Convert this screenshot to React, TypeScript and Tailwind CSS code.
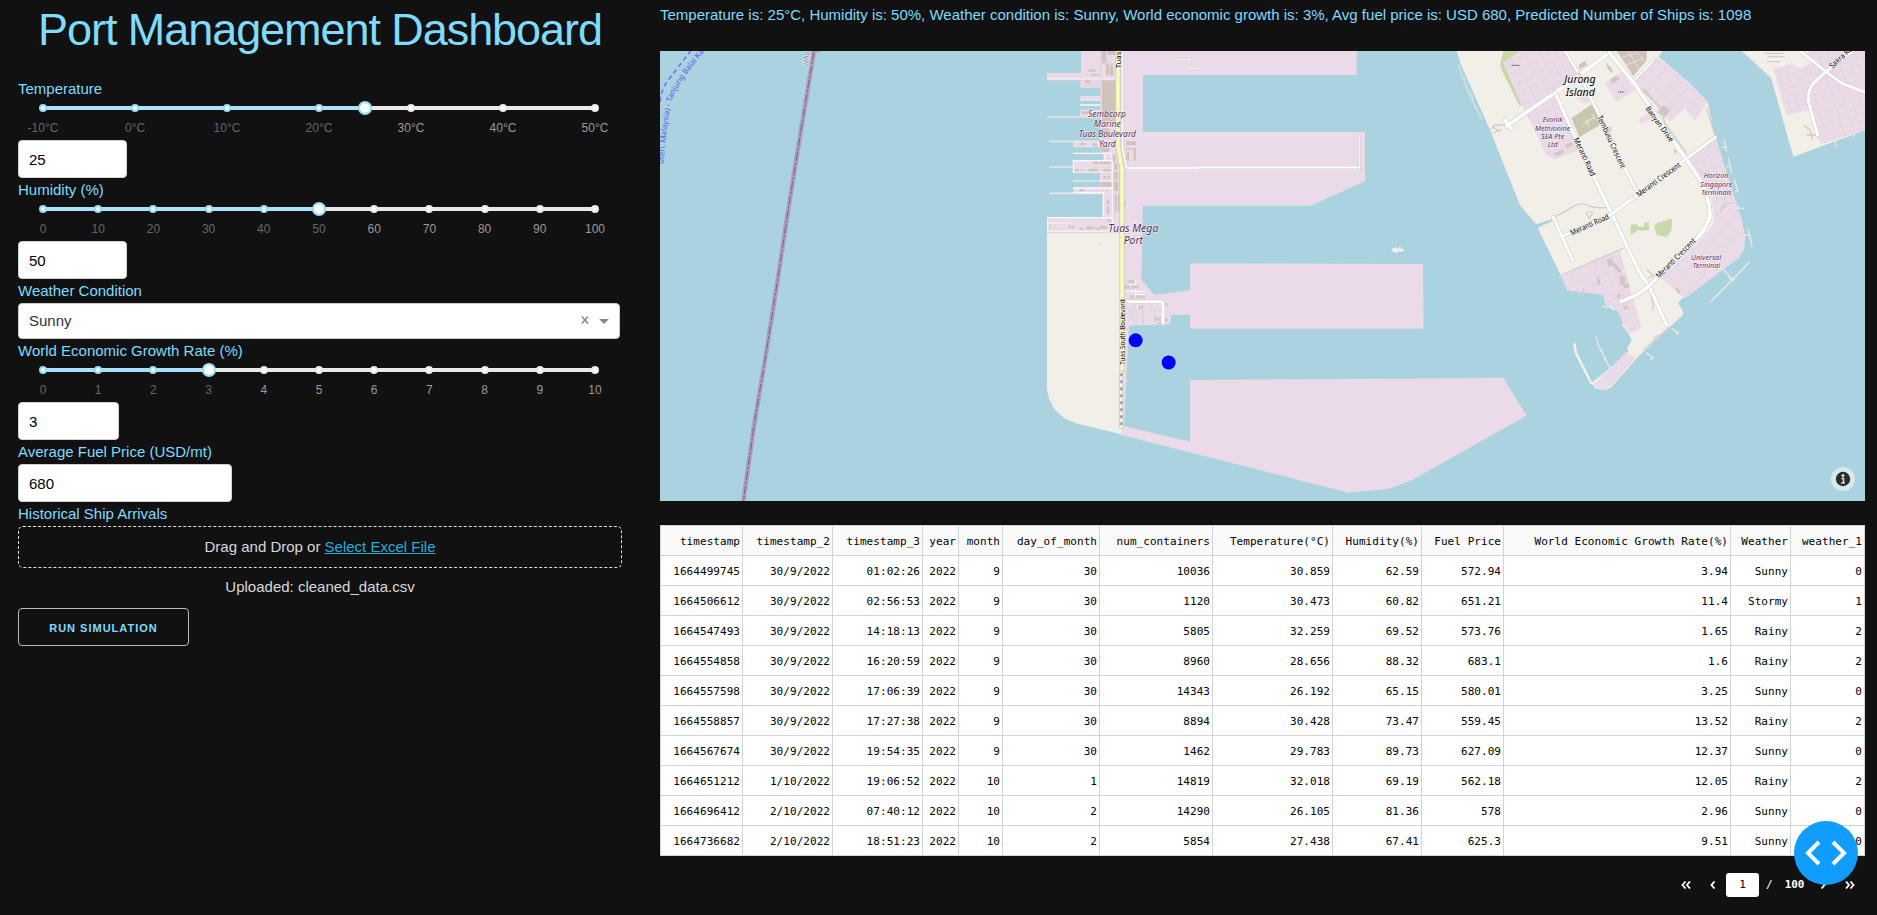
import React from "react";

type Mark = { at: number; label: string };

function Slider({ marks, value }: { marks: Mark[]; value: number }) {
  return (
    <div className="h-[39px] pl-[25px] pr-[27px]">
      <div className="relative h-[14px]">
        <div className="absolute left-0 top-[5px] h-1 w-full rounded-md bg-[#e9e9e9]" />
        <div className="absolute left-0 top-[5px] h-1 rounded-md bg-[#abe2fb]" style={{ width: `${value}%` }} />
        {marks.map((m) => (
          <span
            key={m.at}
            className={`absolute top-[3px] -ml-1 size-2 rounded-full border-2 bg-white ${m.at <= value ? "border-[#96dbfa]" : "border-[#e9e9e9]"}`}
            style={{ left: `${m.at}%` }}
          />
        ))}
        <span
          className="absolute top-0 -ml-[7px] size-[14px] rounded-full border-2 border-[#96dbfa] bg-white"
          style={{ left: `${value}%` }}
        />
        {marks.map((m) => (
          <span
            key={m.at}
            className={`absolute top-[18px] -translate-x-1/2 whitespace-nowrap text-[12px] leading-[18px] ${m.at <= value ? "text-[#666]" : "text-[#999]"}`}
            style={{ left: `${m.at}%` }}
          >
            {m.label}
          </span>
        ))}
      </div>
    </div>
  );
}

const Label = ({ children }: { children: React.ReactNode }) => (
  <label className="block h-6 text-[#7fdbff]">{children}</label>
);

const Field = ({ value, width }: { value: string; width: string }) => (
  <input
    defaultValue={value}
    className={`block h-[38px] rounded border border-[#d1d1d1] bg-white px-[10px] text-[15px] text-black outline-none ${width}`}
  />
);

const tempMarks: Mark[] = [-10, 0, 10, 20, 30, 40, 50].map((t, i) => ({ at: (i * 100) / 6, label: `${t}°C` }));
const pctMarks: Mark[] = Array.from({ length: 11 }, (_, i) => ({ at: i * 10, label: `${i * 10}` }));
const growthMarks: Mark[] = Array.from({ length: 11 }, (_, i) => ({ at: i * 10, label: `${i}` }));

function Road({ d, w = 10 }: { d: string; w?: number }) {
  return (
    <g fill="none" strokeLinecap="round" strokeLinejoin="round">
      <path d={d} stroke="#cfcac8" strokeWidth={w + 3} />
      <path d={d} stroke="#fff" strokeWidth={w} />
    </g>
  );
}

type TProps = { x: number; y: number; s: number; w?: number; r?: number; c?: string; italic?: boolean; children: string };
function T({ x, y, s, w, r = 0, c = "#5c2d5c", italic = true, children }: TProps) {
  return (
    <text
      transform={`translate(${x} ${y}) rotate(${r})`}
      textAnchor="middle"
      fontFamily="Noto Sans, sans-serif"
      fontSize={s}
      fontStyle={italic ? "italic" : "normal"}
      textLength={w}
      lengthAdjust="spacingAndGlyphs"
      fill={c}
      stroke="#fff"
      strokeOpacity={0.6}
      strokeWidth={4}
      strokeLinejoin="round"
      paintOrder="stroke"
    >
      {children}
    </text>
  );
}

const rects = (list: number[][]) => list.map(([x, y, w, h], i) => <rect key={i} x={x} y={y} width={w} height={h} />);

function PortMap() {
  return (
    <svg className="block h-[450px] w-[1205px]" viewBox="660 51 1205 450">
      <defs>
        <pattern id="lotsA" width="40" height="32" patternUnits="userSpaceOnUse" patternTransform="rotate(-30)">
          <path d="M0 0H40M0 0V32M20 0V16" stroke="#cfc8cf" strokeWidth="3.500" fill="none" />
          <path d="M0 0H40M0 0V32M20 0V16" stroke="#f0ebee" strokeWidth="1.500" fill="none" />
        </pattern>
        <pattern id="lotsB" width="26" height="20" patternUnits="userSpaceOnUse" patternTransform="rotate(-18)">
          <path d="M0 0H26M0 0V20" stroke="#d9cfd8" strokeWidth="2.500" fill="none" />
        </pattern>
        <pattern id="lotsC" width="44" height="34" patternUnits="userSpaceOnUse" patternTransform="rotate(40)">
          <path d="M0 0H44M0 0V34" stroke="#cfc8cf" strokeWidth="3.500" fill="none" />
          <path d="M0 0H44M0 0V34" stroke="#f0ebee" strokeWidth="1.500" fill="none" />
        </pattern>
        <path id="ferry" d="M40 492 C46 430 50 380 60 325 C68 270 115 215 175 138" />
      </defs>
      <rect x="660" y="51" width="1205" height="450" fill="#aad3df" />

      {/* Maritime border and ferry line */}
      <g transform="translate(650 0) scale(.33333)">
        <g fill="none">
          <path d="M492 153L445 440L413 640L383 840L345 1080L313 1270L280 1504" stroke="#a9a3bf" strokeWidth="14" />
          <path d="M492 153L445 440L413 640L383 840L345 1080L313 1270L280 1504" stroke="#8b5f8c" strokeWidth="3.500" strokeDasharray="26 5 8 5" />
          <path d="M490 153L510 153" stroke="#a9a3bf" strokeWidth="9" />
          <path d="M30 305Q34 265 58 236L124 150" stroke="#6a77f5" strokeWidth="5" strokeDasharray="14 10" />
        </g>
        <text fontFamily="Noto Sans, sans-serif" fontSize="24" fill="#5c5cf2">
          <textPath href="#ferry" textLength="378" lengthAdjust="spacingAndGlyphs">uteri, Malaysia) - Tanjung Balai Kar</textPath>
        </text>
        <T x={477} y={176} s={22} r={-82} w={40} c="#8b5f8c">Joho</T>
      </g>

      {/* Tuas reclaimed land */}
      <g transform="translate(1020 260) scale(.33333)">
        <path
          d="M302-100H363V58L403 105L510 91V10L1209 12L1211 206H510V165H455L449 193L327 197L312 498L510 545V360L1450 354L1520 467L1176 660L1108 686L985 698L302 524Z"
          fill="#ebdbe8"
        />
        <path d="M81-83H304V523L167 490L132 474L102 446L88 418L81 390Z" fill="#f2efe9" />
      </g>

      <g transform="translate(1020 40) scale(.33333)">
        <path
          d="M183 33H1010V105H369V276H1035V423L873 497H369L364 722H302V577H81V532H248V460H160V440H240V400H160V360H250V340H240V322H160V305H240V229H181V209H240V198H181V192H240V181H181V168H240V143H181V121H81V99H183Z"
          fill="#ebdbe8"
        />
        <g stroke="#e9e4e6" strokeWidth="5" fill="none">
          <path d="M81 231H240M88 304H240M88 381H160M88 460H280" />
        </g>
        <g stroke="#faf6f9" strokeWidth="3.500" fill="none">
          <path d="M83 117H290M181 180H240M181 195H240M160 340H270M160 423H275M160 362H277V397H160ZM160 445H280M160 458H250V532M83 533H277V574H83ZM277 365V560M255 340V360M83 549H155M270 335L280 365" />
        </g>
        <g stroke="#d5cdd2" strokeWidth="2" fill="none">
          <path d="M83 121H290M160 399H277M83 577H300M242 33V335M262 33V110M245 70H285M188 130H240M188 138H240M281 395V530M300 395V515M281 515H300" />
        </g>
        <g fill="#d0c3bb">
          {rects([
            [246, 121, 40, 124], [246, 33, 12, 35], [262, 33, 24, 12], [258, 72, 10, 33], [270, 75, 10, 33], [205, 88, 22, 7],
            [211, 102, 26, 5], [197, 122, 14, 7], [185, 214, 20, 9], [242, 318, 26, 18], [178, 309, 20, 6], [218, 311, 14, 7],
            [219, 365, 15, 7], [238, 365, 34, 7], [165, 388, 12, 6], [183, 388, 6, 6], [205, 387, 30, 7], [248, 388, 25, 6],
            [242, 426, 32, 14], [250, 408, 8, 8], [262, 408, 8, 8], [178, 447, 15, 7], [318, 304, 30, 11], [318, 324, 12, 5],
            [320, 335, 7, 26], [334, 324, 14, 5], [341, 330, 7, 32], [283, 370, 10, 20], [283, 395, 10, 24], [283, 425, 12, 28],
            [285, 465, 5, 48], [293, 465, 5, 48], [261, 480, 6, 12], [261, 500, 6, 22], [146, 557, 7, 9], [155, 557, 7, 9],
            [180, 563, 10, 6], [200, 560, 20, 8], [225, 563, 13, 6], [240, 558, 20, 9], [262, 538, 12, 7], [88, 554, 3, 12],
            [312, 484, 6, 10], [278, 345, 9, 20], [245, 265, 24, 30],
          ])}
        </g>
        <Road w={5} d="M307 34V325L319 384" />
        <Road w={3} d="M320 285H1018V393H316" />
        <path d="M320 384L535 384V382H1018" stroke="#fff" strokeWidth="4" fill="none" />
        <path d="M508 34V85H540M455 59H517" stroke="#d3cbd0" strokeWidth="7" fill="none" />
        <path d="M508 34V85H540M455 59H517" stroke="#f7f2f5" strokeWidth="4" fill="none" />
        <g fill="none">
          <path d="M294 34V318L306 385V992" stroke="#c9c99b" strokeWidth="15" />
          <path d="M294 34V318L306 385V992" stroke="#f7fabf" strokeWidth="11" />
        </g>
        <path d="M236 612H243L246 616" stroke="#d3cbc6" strokeWidth="2" fill="none" />
        <path d="M1113 630L1122 624L1130 622L1134 626L1140 620L1144 626L1152 628L1150 636L1138 634L1130 639L1120 635Z" fill="#f2efe9" />
        <T x={261} y={230} s={27} w={114}>Sembcorp</T>
        <T x={262} y={261} s={27} w={80}>Marine</T>
        <T x={262} y={291} s={27} w={172}>Tuas Boulevard</T>
        <T x={262} y={321} s={27} w={50}>Yard</T>
        <T x={340} y={575} s={32} w={150}>Tuas Mega</T>
        <T x={340} y={612} s={32} w={58}>Port</T>
        <T x={302} y={60} s={22} w={50} r={-90} c="#000" italic={false}>Tuas</T>
      </g>

      <g transform="translate(1020 260) scale(.33333)">
        <g stroke="#fff" strokeWidth="3" fill="none">
          <path d="M315 94H345M347 60V108M345 94H375M345 103H375M352 130V150M320 75H350" />
        </g>
        <g stroke="#d2d0c8" strokeWidth="2.500" fill="none">
          <path d="M325 152H342M338 140V172H325M348 130V190M352 148H370V193M393 130V148M403 150V185M403 150H420" />
        </g>
        <g fill="#d6c8c4">
          {rects([[322, 60, 22, 10], [314, 75, 16, 12], [334, 76, 22, 10], [330, 106, 12, 10], [348, 106, 28, 9], [355, 137, 14, 8], [404, 172, 18, 10], [433, 130, 12, 7], [433, 174, 12, 10], [413, 186, 10, 7]])}
        </g>
        <Road w={9} d="M318 125H420Q429 125 429 134V190" />
        <path d="M304 332V506" stroke="#b9b5b0" strokeWidth="11" />
        <path d="M304 334V504" stroke="#fff" strokeWidth="7" />
        <path d="M304 340V504" stroke="#8f8f8f" strokeWidth="6" strokeDasharray="9 12" />
        <T x={314} y={216} s={22} w={196} r={-90} c="#000" italic={false}>Tuas South Boulevard</T>
        <circle cx="347" cy="241" r="21" fill="#00f" />
        <circle cx="446" cy="307.500" r="21" fill="#00f" />
      </g>

      {/* Jurong Island */}
      <g transform="translate(1440 40) scale(.33333)">
        <path
          d="M50 33L62 72L150 270L240 495L288 553L336 537L338 543L293 563L363 708L380 748L395 753L475 755L492 768L495 790L515 808L533 812L545 835L550 860L565 880L575 900L562 925L565 935L510 985L455 1028L465 1045L485 1050L500 1048L515 1040L590 955L690 860L729 825L728 812L714 790L724 777L895 655L912 628L915 590L905 540L885 480L860 400L825 290L803 185L750 130L655 50L668 33Z"
          fill="#f2efe9"
        />
        <path d="M905 33L993 113L1060 350L1278 270V33Z" fill="#f2efe9" />
        <path d="M403 910L407 937L455 1032" stroke="#f2efe9" strokeWidth="8" fill="none" />
        <path d="M180 75L190 33H240L232 40L190 68L245 195L240 200L185 90Z" fill="#c8daaa" />
        {[
          ["M190 68L240 33H375L418 105L345 160L250 205Z", "url(#lotsA)"],
          ["M250 205L345 162L415 330L345 358L318 345L272 245Z", "url(#lotsB)"],
          ["M583 120L650 52L750 130L803 185L765 243L735 205L690 245L655 205Z", "url(#lotsC)"],
          ["M495 130L545 95L585 150L530 185Z", "none"],
          ["M595 240L620 220L650 228L603 252Z", "none"],
          ["M410 175L440 160L452 185L428 190Z", "none"],
          ["M745 355L828 292L860 400L885 480L820 500L805 450L780 425Z", "url(#lotsA)"],
          ["M818 500L888 480L905 540L915 590L910 628L895 655L735 775L663 715L790 590L822 550Z", "url(#lotsC)"],
          ["M363 708L538 632L605 865L567 880L550 850L533 812L495 790L490 765L395 753L380 748Z", "url(#lotsB)"],
          ["M560 935L585 955L515 1035L485 1050L460 1035Z", "url(#lotsC)"],
          ["M1000 88L1115 33H1278V270L1145 312L1130 290L1105 210L1040 225Z", "url(#lotsB)"],
        ].map(([d, f], i) => (
          <g key={i}>
            <path d={d} fill="#ebdbe8" />
            <path d={d} fill={f} />
          </g>
        ))}
        <path d="M540 632L585 750L607 860L625 780L590 700Z" fill="#f2efe9" />
        <path d="M1010 33H1085L1130 60L1080 85L1050 72L1000 88L993 108L940 60Z" fill="#f2efe9" />
        <path d="M395 235L460 190L480 255L418 292Z" fill="#c8c6ae" />
        <path d="M428 258L440 245L462 232M438 238L446 258M458 222L464 238" stroke="#efece2" strokeWidth="3" fill="none" />
        <path d="M572 555L590 552L595 560L612 560L612 548L627 547V570L610 572L595 570L572 585ZM642 558L655 545L665 547L670 540L682 543L682 537L697 537L695 570L680 592L650 585Z" fill="#c9d8ad" />
        <path d="M530 33H620L620 60L580 108L545 55Z" fill="#cfc2b8" />
        <path d="M565 33L600 90M590 33L612 62M545 52L590 40M560 75L610 55" stroke="#ebdbe8" strokeWidth="3" />
        <g fill="#d3c6bf">
          <path d="M652 215L670 195L690 210L672 235ZM415 75L435 62L442 75L420 88ZM510 120L530 105L540 118L518 130ZM495 65L515 85L520 100L505 90ZM375 315L395 305L400 315L382 325ZM340 340L370 328L374 338L345 348ZM700 325L712 335L705 342ZM500 660L515 655L520 675L506 680ZM520 665L545 690L540 700L520 680ZM540 705L558 715L552 740L540 730ZM705 748L712 743L722 757L716 762ZM550 735L568 730L568 740L552 745ZM470 715L478 715L482 735L474 735ZM530 765L540 760L542 770L532 775ZM550 800L560 795L565 805L553 810Z" />
        </g>
        <g stroke="#d2ccc8" fill="none" strokeWidth="4">
          <path d="M150 270L165 255H200M155 280L185 268M160 262L180 275" />
          <path d="M345 530Q370 520 390 505Q420 485 440 495Q460 505 500 503M438 520Q450 510 458 520L448 535ZM363 705L550 625M595 150L625 190M610 145L640 180M590 135L660 200L675 250L740 340M620 690L640 705L625 715M630 745L640 800L635 812M740 350L830 285M800 205L825 285M975 40H1030M985 50H1035M980 65H1020M1090 255L1110 270L1118 300M1100 285H1130M840 515L860 490H880M430 745V770M610 930L690 860M640 895L655 885" />
        </g>
        <path d="M57 72L65 110L80 135L85 160L105 195L126 240M72 110L78 140L96 165L102 195L120 225" stroke="#d6dedf" strokeWidth="4" fill="none" />
        <g stroke="#e9e9e4" fill="none" strokeWidth="4">
          <path d="M852 298L860 335M845 322H862M865 355L876 400M858 380H872M883 418L895 458M885 455H897M893 505H912M888 510L898 500M925 568L937 622M912 585H928M930 665L812 785M845 685L880 720L885 712M865 710L875 722M695 865L715 880M708 885L718 875M618 938L640 955M630 960L642 950M468 890L475 915L510 985M485 930L495 960M488 798L505 803M545 855L555 860M1185 303L1190 320M1240 278L1243 290" />
        </g>
        <Road w={8} d="M375 33L418 103L455 180L595 465" />
        <Road w={6} d="M583 122L640 62" />
        <Road w={11} d="M508 38L345 158L200 258M195 240L212 265" />
        <Road w={10} d="M345 158L400 280L515 522L600 700L627 738L680 855" />
        <Road w={11} d="M508 38L583 130L690 290L738 357L775 410Q812 480 810 530Q800 560 780 585L627 738L590 765L543 785" />
        <Road w={9} d="M826 292L738 357L515 522L370 588M340 532L398 662" />
        <Road w={9} d="M1070 25L1158 95L1205 130L1280 158M1280 0L1158 95L1120 130Q1104 150 1104 180L1133 285" />
        <circle cx="418" cy="103" r="5" fill="#f3c9bf" />
        <path d="M500 265L514 260L514 275L505 275Z" fill="#e8c9c5" />
        <path d="M215 76H240" stroke="#555" strokeWidth="4" strokeDasharray="3 2" />
        <path d="M535 156H555" stroke="#777" strokeWidth="4" strokeDasharray="3 2" />
        <T x={420} y={130} s={34} w={94} c="#000">Jurong</T>
        <T x={421} y={167} s={34} w={88} c="#000">Island</T>
        <T x={338} y={247} s={24} w={60}>Evonik</T>
        <T x={338} y={272} s={24} w={106}>Methionine</T>
        <T x={338} y={297} s={24} w={70}>SEA Pte</T>
        <T x={338} y={322} s={24} w={30}>Ltd</T>
        <T x={828} y={415} s={24} w={74}>Horizon</T>
        <T x={829} y={440} s={24} w={96}>Singapore</T>
        <T x={829} y={465} s={24} w={90}>Terminals</T>
        <T x={798} y={660} s={24} w={90}>Universal</T>
        <T x={799} y={685} s={24} w={82}>Terminal</T>
        <T x={427} y={354} s={23} w={124} r={65} c="#000" italic={false}>Meranti Road</T>
        <T x={507} y={309} s={23} w={172} r={65} c="#000" italic={false}>Tembusu Crescent</T>
        <T x={653} y={257} s={23} w={126} r={54} c="#000" italic={false}>Banyan Drive</T>
        <T x={660} y={425} s={23} w={158} r={-36} c="#000" italic={false}>Meranti Crescent</T>
        <T x={452} y={561} s={23} w={124} r={-24} c="#000" italic={false}>Meranti Road</T>
        <T x={713} y={660} s={23} w={158} r={-45} c="#000" italic={false}>Meranti Crescent</T>
        <T x={1208} y={58} s={23} w={84} r={-42} c="#000" italic={false}>Sakra Ro</T>
      </g>

      {/* Attribution toggle */}
      <circle cx="1843" cy="479" r="12" fill="#fff" fillOpacity=".5" />
      <circle cx="1843" cy="479" r="7.200" fill="#2b2b2b" />
      <circle cx="1843" cy="475.500" r="1.500" fill="#d5e9ef" />
      <path d="M1841.500 478.500H1843.500V482.500M1841.200 483H1844.800" stroke="#d5e9ef" strokeWidth="1.500" fill="none" />
    </svg>
  );
}

const headers = ["timestamp", "timestamp_2", "timestamp_3", "year", "month", "day_of_month", "num_containers", "Temperature(°C)", "Humidity(%)", "Fuel Price", "World Economic Growth Rate(%)", "Weather", "weather_1"];
const rows = [
  ["1664499745", "30/9/2022", "01:02:26", "2022", "9", "30", "10036", "30.859", "62.59", "572.94", "3.94", "Sunny", "0"],
  ["1664506612", "30/9/2022", "02:56:53", "2022", "9", "30", "1120", "30.473", "60.82", "651.21", "11.4", "Stormy", "1"],
  ["1664547493", "30/9/2022", "14:18:13", "2022", "9", "30", "5805", "32.259", "69.52", "573.76", "1.65", "Rainy", "2"],
  ["1664554858", "30/9/2022", "16:20:59", "2022", "9", "30", "8960", "28.656", "88.32", "683.1", "1.6", "Rainy", "2"],
  ["1664557598", "30/9/2022", "17:06:39", "2022", "9", "30", "14343", "26.192", "65.15", "580.01", "3.25", "Sunny", "0"],
  ["1664558857", "30/9/2022", "17:27:38", "2022", "9", "30", "8894", "30.428", "73.47", "559.45", "13.52", "Rainy", "2"],
  ["1664567674", "30/9/2022", "19:54:35", "2022", "9", "30", "1462", "29.783", "89.73", "627.09", "12.37", "Sunny", "0"],
  ["1664651212", "1/10/2022", "19:06:52", "2022", "10", "1", "14819", "32.018", "69.19", "562.18", "12.05", "Rainy", "2"],
  ["1664696412", "2/10/2022", "07:40:12", "2022", "10", "2", "14290", "26.105", "81.36", "578", "2.96", "Sunny", "0"],
  ["1664736682", "2/10/2022", "18:51:23", "2022", "10", "2", "5854", "27.438", "67.41", "625.3", "9.51", "Sunny", "0"],
];

function DataGrid() {
  return (
    <div className="grid w-[1205px] grid-cols-[82px_90px_90px_36px_44px_97px_113px_120px_89px_82px_227px_60px_74px] border-l border-t border-[#d3d3d3] bg-white text-right font-['DejaVu_Sans_Mono',monospace] text-[11px] tracking-[0.05px] text-black">
      {headers.map((h) => (
        <div key={h} className="h-[30px] whitespace-nowrap border-b border-r border-[#d3d3d3] bg-[#fafafa] pr-[2px] leading-[31px]">
          {h}
        </div>
      ))}
      {rows.map((r, i) =>
        r.map((c, j) => (
          <div key={`${i}-${j}`} className="h-[30px] whitespace-nowrap border-b border-r border-[#d3d3d3] pr-[2px] leading-[31px]">
            {c}
          </div>
        )),
      )}
    </div>
  );
}

const Chevrons = ({ d, w }: { d: string; w: number }) => (
  <svg width={w} height="8" viewBox={`0 0 ${w} 8`} fill="none" stroke="#fff" strokeWidth="1.800">
    <path d={d} />
  </svg>
);

export default function App() {
  return (
    <div className="flex h-[915px] w-[1877px] overflow-hidden bg-[#111] font-['Liberation_Sans',Arial,sans-serif] text-[15px] leading-6">
      <section className="ml-[18px] w-[604px] shrink-0 pt-[3px]">
        <h1 className="mb-5 h-[54px] whitespace-nowrap text-center text-[45px] leading-[54px] tracking-[-1.06px] text-[#7fdbff]">
          Port Management Dashboard
        </h1>
        <Label>Temperature</Label>
        <Slider marks={tempMarks} value={58.333} />
        <Field value="25" width="w-[109px]" />
        <Label>Humidity (%)</Label>
        <Slider marks={pctMarks} value={50} />
        <Field value="50" width="w-[109px]" />
        <Label>Weather Condition</Label>
        <div className="flex h-9 w-[602px] items-center rounded border border-[#ccc] bg-white pl-[10px] pr-[10px] text-[#333]">
          <span className="flex-1">Sunny</span>
          <svg className="mb-[2px] mr-[10px]" width="8" height="8" viewBox="0 0 8 8" fill="none" stroke="#888" strokeWidth="1.500">
            <path d="M1 0.500L7 7.500M7 0.500L1 7.500" />
          </svg>
          <span className="h-0 w-0 border-x-[5px] border-t-[5px] border-x-transparent border-t-[#888]" />
        </div>
        <Label>World Economic Growth Rate (%)</Label>
        <Slider marks={growthMarks} value={30} />
        <Field value="3" width="w-[101px]" />
        <Label>Average Fuel Price (USD/mt)</Label>
        <Field value="680" width="w-[214px]" />
        <Label>Historical Ship Arrivals</Label>
        <div className="flex h-[42px] items-center justify-center rounded-[5px] border border-dashed border-[#ddd] text-[#d9d9d9]">
          <span>
            Drag and Drop or <a className="text-[#1eaedb] underline">Select Excel File</a>
          </span>
        </div>
        <p className="mt-[7px] text-center text-[#d9d9d9]">Uploaded: cleaned_data.csv</p>
        <button className="mt-[9px] block h-[38px] w-[171px] rounded border border-[#bbb] pt-px text-center text-[11px] font-semibold tracking-[1px] text-[#7fdbff]">
          RUN SIMULATION
        </button>
      </section>

      <section className="ml-[38px] w-[1205px] shrink-0 pt-[3px]">
        <p className="mb-6 h-6 whitespace-nowrap text-[#7fdbff]">
          Temperature is: 25°C, Humidity is: 50%, Weather condition is: Sunny, World economic growth is: 3%, Avg fuel price is: USD 680, Predicted Number of Ships is: 1098
        </p>
        <PortMap />
        <div className="mt-6">
          <DataGrid />
        </div>
        <div className="mt-[17px] flex h-6 items-center pl-[1021px] font-['DejaVu_Sans_Mono',monospace] text-[11px] text-white">
          <Chevrons w={10} d="M4.500 .5L1.500 4L4.500 7.500M9 .5L6 4L9 7.500" />
          <span className="ml-[19px] flex">
            <Chevrons w={6} d="M4.500 .5L1.500 4L4.500 7.500" />
          </span>
          <span className="ml-[10px] flex h-6 w-[33px] items-center justify-center rounded-[3px] bg-white text-black">1</span>
          <span className="ml-[7px]">/</span>
          <span className="ml-[12px] font-bold">100</span>
          <span className="ml-[15px] flex">
            <Chevrons w={6} d="M1.500 .5L4.500 4L1.500 7.500" />
          </span>
          <span className="ml-[19px] flex">
            <Chevrons w={10} d="M1 .5L4 4L1 7.500M5.500 .5L8.500 4L5.500 7.500" />
          </span>
        </div>
      </section>

      <button className="fixed left-[1794px] top-[821px] flex size-16 items-center justify-center rounded-full bg-[#119dff]">
        <svg width="44" height="26" viewBox="0 0 44 26" fill="none" stroke="#fff" strokeWidth="4">
          <path d="M15 2L4 13L15 24M29 2L40 13L29 24" />
        </svg>
      </button>
    </div>
  );
}
